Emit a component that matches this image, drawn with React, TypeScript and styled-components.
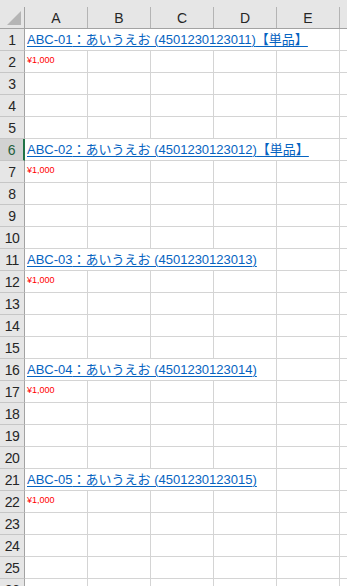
import React from 'react'
import styled, { createGlobalStyle } from 'styled-components'

const GlobalStyle = createGlobalStyle`
  html, body {
    margin: 0;
    padding: 0;
    background: #fff;
    overflow: hidden;
  }
  body {
    font-family: "Liberation Sans", "Noto Sans CJK JP", sans-serif;
  }
`

const COLUMNS = ['A', 'B', 'C', 'D', 'E']

const items = [
  { code: 'ABC-01', jan: '4501230123011', single: true },
  { code: 'ABC-02', jan: '4501230123012', single: true },
  { code: 'ABC-03', jan: '4501230123013', single: false },
  { code: 'ABC-04', jan: '4501230123014', single: false },
  { code: 'ABC-05', jan: '4501230123015', single: false },
]

const Sheet = styled.div`
  width: 347px;
  height: 586px;
  overflow: hidden;
  background: #fff;
`

const TopBand = styled.div`
  height: 7px;
  background: #e6e6e6;
`

const Row = styled.div`
  display: grid;
  grid-template-columns: 25px repeat(5, 63px) 1fr;
  height: 22px;
`

const HeaderRow = styled(Row)`
  background: #e6e6e6;
  border-bottom: 1px solid #a3a3a3;
  box-sizing: border-box;
`

const Corner = styled.div`
  display: flex;
  align-items: flex-end;
  justify-content: flex-end;
  padding: 0 3px 3px 0;
  border-right: 1px solid #a3a3a3;
  box-sizing: border-box;
`

const ColHead = styled.div<{ $last?: boolean }>`
  display: flex;
  align-items: center;
  justify-content: center;
  font-size: 14px;
  color: #262626;
  border-right: ${p => (p.$last ? 'none' : '1px solid #b4b4b4')};
  box-sizing: border-box;
`

const RowHead = styled.div<{ $active?: boolean }>`
  display: flex;
  align-items: center;
  justify-content: center;
  font-size: 14px;
  letter-spacing: -0.5px;
  color: ${p => (p.$active ? '#1f5f3c' : '#262626')};
  background: ${p => (p.$active ? '#d2d2d2' : '#e6e6e6')};
  border-right: ${p => (p.$active ? '2px solid #217346' : '1px solid #a3a3a3')};
  border-bottom: 1px solid #c6c6c6;
  box-sizing: border-box;
  padding-top: 1px;
`

const Cell = styled.div<{ $span?: number; $last?: boolean }>`
  grid-column: span ${p => p.$span ?? 1};
  display: flex;
  border-right: ${p => (p.$last ? 'none' : '1px solid #d4d4d4')};
  border-bottom: 1px solid #d4d4d4;
  box-sizing: border-box;
  padding-left: 2px;
  white-space: nowrap;
  overflow: visible;
`

const LinkCell = styled(Cell)`
  align-items: flex-end;
  padding-bottom: 3px;
`

const PriceCell = styled(Cell)`
  align-items: flex-start;
  padding-top: 5px;
`

const Link = styled.a`
  font-size: 13px;
  line-height: 15px;
  color: #0563c1;
  text-decoration: underline;
  text-underline-offset: 2px;
`

const Price = styled.span`
  font-size: 9px;
  line-height: 9px;
  color: #ff0000;
`

function SelectAll() {
  return (
    <svg width="14" height="14" viewBox="0 0 14 14">
      <polygon points="14,0 14,14 0,14" fill="#b5b5b5" />
    </svg>
  )
}

function BlankCells({ from }: { from: number }) {
  const cells = []
  for (let c = from; c <= COLUMNS.length; c++) {
    cells.push(<Cell key={c} $last={c === COLUMNS.length} />)
  }
  return <>{cells}</>
}

export default function App() {
  const rows = []
  for (let r = 1; r <= 26; r++) {
    const block = Math.floor((r - 1) / 5)
    const pos = (r - 1) % 5
    const item = items[block]
    let content
    if (item && pos === 0) {
      const span = item.single ? 5 : 4
      content = (
        <>
          <LinkCell $span={span}>
            <Link>
              {item.code}：あいうえお ({item.jan}){item.single ? '【単品】' : ''}
            </Link>
          </LinkCell>
          <BlankCells from={span} />
        </>
      )
    } else if (item && pos === 1) {
      content = (
        <>
          <PriceCell>
            <Price>¥1,000</Price>
          </PriceCell>
          <BlankCells from={1} />
        </>
      )
    } else {
      content = (
        <>
          <Cell />
          <BlankCells from={1} />
        </>
      )
    }
    rows.push(
      <Row key={r}>
        <RowHead $active={r === 6}>{r}</RowHead>
        {content}
      </Row>
    )
  }

  return (
    <>
      <GlobalStyle />
      <Sheet>
        <TopBand />
        <HeaderRow>
          <Corner>
            <SelectAll />
          </Corner>
          {COLUMNS.map(c => (
            <ColHead key={c}>{c}</ColHead>
          ))}
          <ColHead $last />
        </HeaderRow>
        {rows}
      </Sheet>
    </>
  )
}
